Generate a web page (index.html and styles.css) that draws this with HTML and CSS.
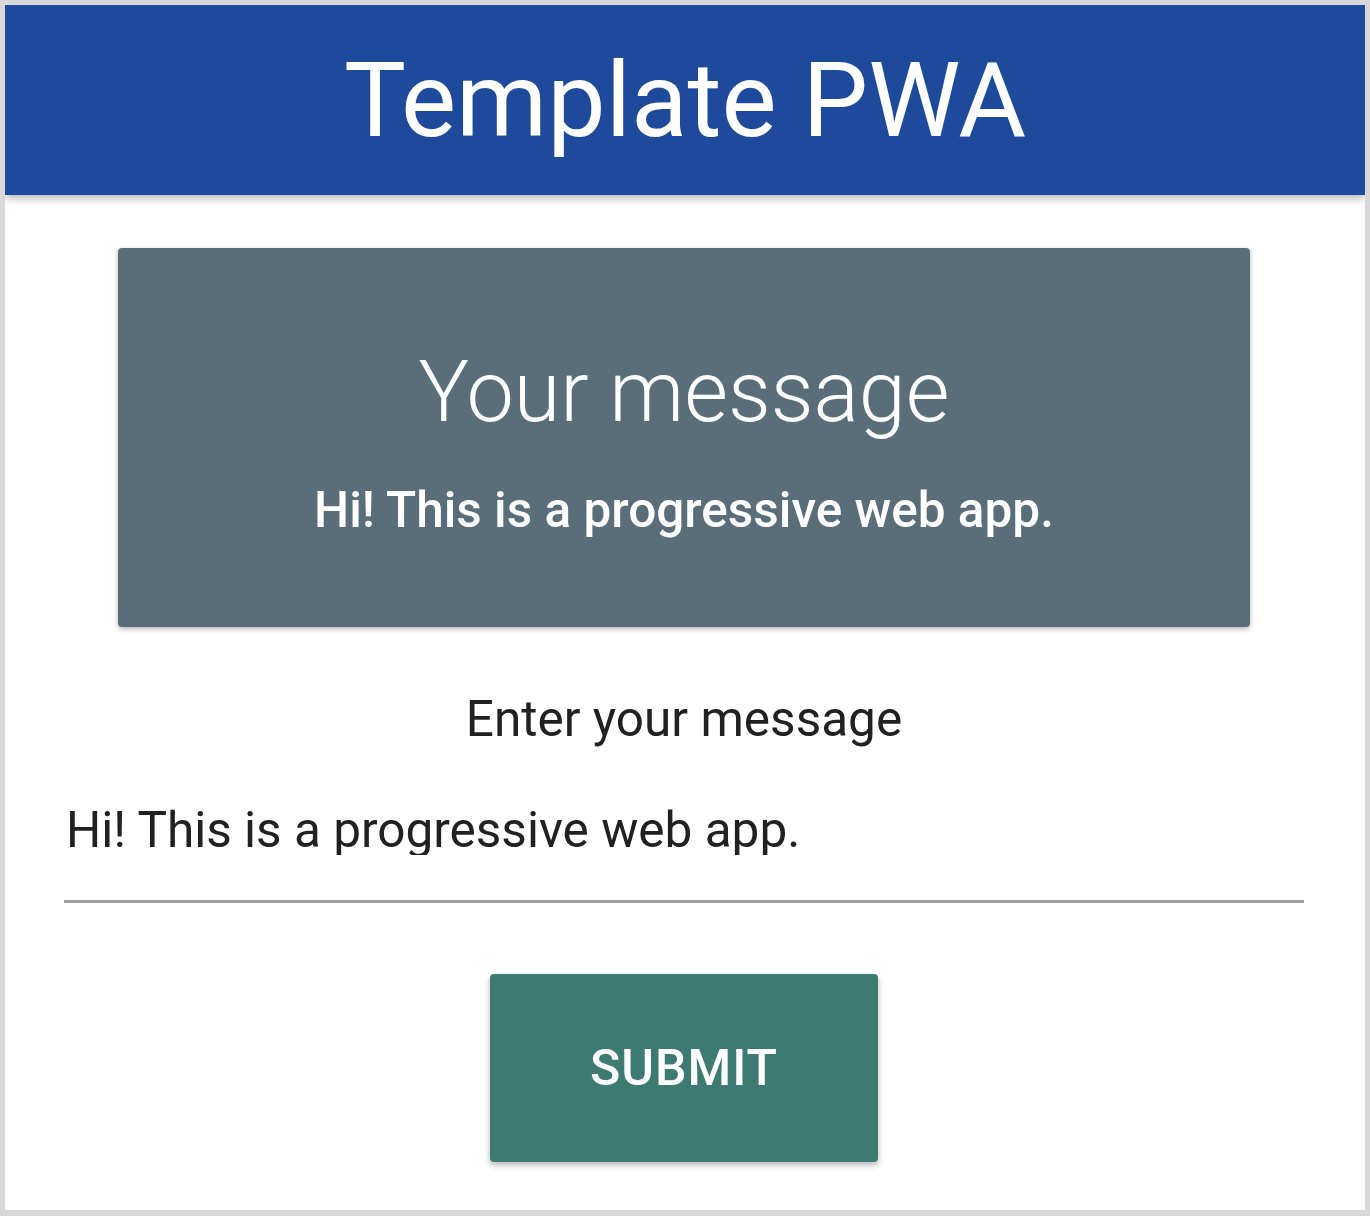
FILE: index.html
```html
<!DOCTYPE html>
<html lang="en">
<head>
<meta charset="utf-8">
<title>Template PWA</title>
<link rel="stylesheet" href="styles.css">
</head>
<body>
<div class="frame">
  <header class="appbar">
    <h1 class="appbar-title">Template PWA</h1>
  </header>
  <main class="content">
    <section class="card">
      <h2 class="card-title">Your message</h2>
      <p class="card-text">Hi! This is a progressive web app.</p>
    </section>
    <label class="field-label" for="msg">Enter your message</label>
    <div class="field">
      <input id="msg" class="field-input" type="text" value="Hi! This is a progressive web app.">
    </div>
    <button class="submit" type="button">SUBMIT</button>
  </main>
</div>
</body>
</html>
```

FILE: styles.css
```css
html, body {
  margin: 0;
  padding: 0;
  background: #ffffff;
}
.frame {
  box-sizing: border-box;
  width: 1370px;
  height: 1216px;
  border: 5px solid #d8d8d8;
  border-bottom-width: 6px;
  background: #ffffff;
  font-family: Roboto, "Liberation Sans", sans-serif;
  overflow: hidden;
}
.appbar {
  height: 190px;
  background: #1e4a9c;
  box-shadow: 0 3px 8px rgba(0, 0, 0, 0.3);
  display: flex;
  align-items: center;
  justify-content: center;
  position: relative;
  z-index: 1;
}
.appbar-title {
  margin: 0;
  color: #ffffff;
  font-weight: 400;
  font-size: 104px;
  line-height: 1;
  letter-spacing: 0;
  padding-top: 2px;
}
.content {
  display: flex;
  flex-direction: column;
  align-items: center;
  padding-right: 2px;
}
.card {
  box-sizing: border-box;
  width: 1132px;
  height: 379px;
  margin-top: 53px;
  background: #5a6e7a;
  border-radius: 4px;
  box-shadow: 0 2px 5px rgba(0, 0, 0, 0.3);
  color: #ffffff;
  text-align: center;
  padding-top: 103px;
}
.card-title {
  margin: 0;
  font-weight: 300;
  font-size: 84.5px;
  line-height: 84.5px;
}
.card-text {
  margin: 50px 0 0;
  font-weight: 500;
  font-size: 49.5px;
  line-height: 49.5px;
}
.field-label {
  margin-top: 68px;
  font-size: 49.5px;
  line-height: 49.5px;
  color: #212121;
}
.field {
  width: 1240px;
  margin-top: 60.5px;
  border-bottom: 3px solid #9e9e9e;
  padding-bottom: 45px;
}
.field-input {
  display: block;
  width: 100%;
  box-sizing: border-box;
  border: 0;
  outline: 0;
  padding: 0 0 0 2px;
  margin: 0;
  background: transparent;
  font-family: Roboto, "Liberation Sans", sans-serif;
  font-size: 49.5px;
  line-height: 49.5px;
  height: 49.5px;
  color: #212121;
}
.submit {
  margin-top: 71px;
  width: 388px;
  height: 188px;
  background: #3d7b72;
  border: 0;
  border-radius: 4px;
  box-shadow: 0 3px 6px rgba(0, 0, 0, 0.3);
  color: #ffffff;
  font-family: Roboto, "Liberation Sans", sans-serif;
  font-weight: 500;
  font-size: 50px;
  letter-spacing: 1px;
  padding: 0;
}
```
